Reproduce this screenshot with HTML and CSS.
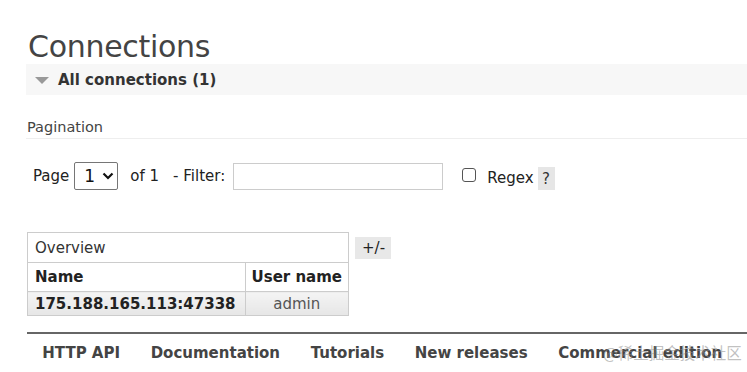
FILE: index.html
```html
<!DOCTYPE html>
<html>
<head>
<meta charset="utf-8">
<link rel="stylesheet" href="styles.css">
</head>
<body>
<main class="main">
  <h1 class="title">Connections</h1>
  <section class="section">
    <h2 class="section-head"><span class="tri"></span>All connections (1)</h2>
    <div class="hider">
      <h3 class="pag-title">Pagination</h3>
      <div class="filter">
        <span class="lbl">Page</span>
        <span class="select"><span>1</span>
          <svg width="12" height="8" viewBox="0 0 12 8"><path d="M1.5 1.5 L6 6 L10.5 1.5" fill="none" stroke="#111" stroke-width="2.2"/></svg>
        </span>
        <span class="lbl of">of 1</span>
        <span class="lbl dash">- Filter:</span>
        <span class="input"></span>
        <span class="check"></span>
        <span class="lbl regex">Regex</span>
        <span class="help">?</span>
      </div>
      <div class="table-wrap">
        <table class="list">
          <tr><th colspan="2" class="group">Overview</th></tr>
          <tr><th class="h-name">Name</th><th class="h-user">User name</th></tr>
          <tr class="data"><td class="c-name">175.188.165.113:47338</td><td class="c-user">admin</td></tr>
        </table>
        <span class="pm">+/-</span>
      </div>
    </div>
  </section>
</main>
<footer class="footer">
  <a>HTTP API</a>
  <a>Documentation</a>
  <a>Tutorials</a>
  <a>New releases</a>
  <a>Commercial edition</a>
</footer>
<div class="watermark">@稀土掘金技术社区</div>
</body>
</html>
```
FILE: styles.css
```css
html, body {
  margin: 0;
  padding: 0;
  background: #fff;
}
body {
  font-family: "DejaVu Sans", Verdana, sans-serif;
  color: #444;
  width: 747px;
  height: 372px;
  overflow: hidden;
  position: relative;
}
.main {
  padding-left: 26px;
}
.title {
  margin: 0;
  padding: 30px 0 0 2px;
  font-size: 30px;
  font-weight: normal;
  line-height: 34px;
  letter-spacing: -0.3px;
  color: #444;
  height: 34px;
}
.section-head {
  margin: 0;
  height: 31px;
  background: #f7f7f7;
  display: flex;
  align-items: center;
  font-size: 15px;
  font-weight: bold;
  color: #333;
  padding-left: 9px;
}
.tri {
  width: 0;
  height: 0;
  border-left: 7px solid transparent;
  border-right: 7px solid transparent;
  border-top: 7px solid #999;
  margin-right: 9px;
  margin-top: 1px;
}
.hider {
  padding-top: 22px;
}
.pag-title {
  margin: 0;
  font-size: 14.5px;
  font-weight: normal;
  color: #444;
  padding-left: 1px;
  height: 21px;
  line-height: 20px;
  border-bottom: 1px solid #eee;
}
.filter {
  display: flex;
  align-items: center;
  padding: 23px 0 0 7px;
  height: 28px;
  font-size: 15px;
  color: #222;
}
.lbl {
  white-space: nowrap;
}
.select {
  margin-left: 5px;
  width: 44px;
  height: 28px;
  box-sizing: border-box;
  border: 1px solid #767676;
  border-radius: 2px;
  display: flex;
  align-items: center;
  padding-left: 9px;
  gap: 7px;
  font-size: 17px;
  color: #111;
}
.of { margin-left: 12px; }
.dash { margin-left: 14px; }
.input {
  margin-left: 8px;
  width: 210px;
  height: 27px;
  box-sizing: border-box;
  border: 1px solid #ccc;
}
.check {
  margin-left: 19px;
  width: 14px;
  height: 14px;
  box-sizing: border-box;
  border: 1px solid #555;
  border-radius: 3px;
  margin-top: -3px;
}
.regex {
  margin-left: 11px;
  margin-top: 4px;
}
.help {
  margin-left: 4px;
  margin-top: 5px;
  width: 17px;
  height: 23px;
  background: #e6e6e6;
  display: flex;
  align-items: center;
  justify-content: center;
  font-size: 15px;
  color: #333;
}
.table-wrap {
  display: flex;
  align-items: flex-start;
  gap: 6px;
  padding: 42px 0 0 1px;
}
.list {
  border-collapse: collapse;
  font-size: 15px;
}
.list th, .list td {
  border: 1px solid #ccc;
  padding: 0 7px;
}
.list .c-name { padding-right: 9px; }
.list .h-user, .list .c-user { padding: 0 6px; }
.group {
  text-align: left;
  font-weight: normal;
  height: 29px;
  color: #333;
}
.h-name, .h-user {
  text-align: left;
  font-weight: bold;
  height: 28px;
  color: #222;
}
.data td {
  height: 23px;
  background: linear-gradient(#f4f4f4, #e6e6e6);
}
.c-name {
  font-weight: bold;
  color: #222;
}
.c-user {
  text-align: center;
  color: #555;
}
.pm {
  margin-top: 5px;
  background: #e8e8e8;
  font-size: 15px;
  padding: 2px 6px 2px 7px;
  height: 18px;
  line-height: 18px;
  color: #222;
}
.footer {
  margin: 16px 0 0 27px;
  border-top: 2px solid #666;
  display: flex;
  padding-top: 10px;
}
.footer a {
  padding: 0 15.3px;
  font-size: 15px;
  font-weight: bold;
  color: #444;
  white-space: nowrap;
}
.watermark {
  position: absolute;
  left: 603px;
  top: 341px;
  font-family: "Noto Sans CJK SC", sans-serif;
  font-size: 15.5px;
  color: rgba(140, 140, 140, 0.55);
  white-space: nowrap;
}
```
